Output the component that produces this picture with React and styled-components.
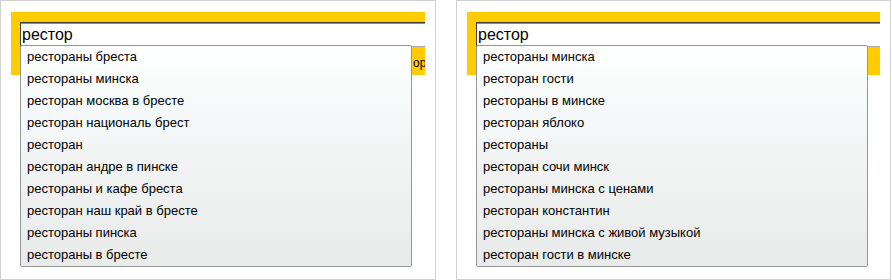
import React from 'react';
import styled, { createGlobalStyle } from 'styled-components';

const GlobalStyle = createGlobalStyle`
    body {
        margin: 0;
        background: #fff;
        font-family: 'Liberation Sans', Arial, sans-serif;
    }
`;

const Page = styled.div`
    display: flex;
    flex-direction: row;
    gap: 20px;
    width: 892px;
    height: 280px;
`;

const Panel = styled.div`
    position: relative;
    box-sizing: border-box;
    width: ${(p) => p.$width}px;
    height: 280px;
    border: 1px solid #d0d0d0;
    padding: 11px 10px 0 10px;
`;

const Yellow = styled.div`
    box-sizing: border-box;
    height: 63px;
    background: #ffcc00;
    padding: 10px 0 0 9px;
    overflow: hidden;
`;

const Input = styled.div`
    box-sizing: border-box;
    width: 420px;
    height: 25px;
    background: #fff;
    border-style: solid;
    border-width: 1px 0 1px 1px;
    border-color: #3f3f3f #c8c8c8 #a8a8a8 #3f3f3f;
    box-shadow: inset 0 1px 0 #8a8a8a;
    padding: 2px 0 0 1px;
    font-size: 16px;
    line-height: 20px;
    color: #000;
`;

const Hint = styled.div`
    padding: 9px 0 0 ${(p) => p.$indent}px;
    font-size: 12px;
    line-height: 14px;
    white-space: nowrap;
    color: #000;
`;

const Dropdown = styled.ul`
    position: absolute;
    left: 19px;
    top: 44px;
    box-sizing: border-box;
    width: 392px;
    margin: 0;
    padding: 0;
    list-style: none;
    border: 1px solid #959595;
    border-radius: 2px;
    background: linear-gradient(#ffffff, #f7fafa 25%, #e9eaea);
`;

const Item = styled.li`
    height: 22px;
    line-height: 22px;
    padding-left: 6px;
    font-size: 13px;
    color: #000;
    white-space: nowrap;
`;

const Suggest = ({ width, hint, items }) => (
    <Panel $width={width}>
        <Yellow>
            <Input>рестор</Input>
            <Hint $indent={hint ? 393 : 0}>{hint}</Hint>
        </Yellow>
        <Dropdown>
            {items.map((item) => (
                <Item key={item}>{item}</Item>
            ))}
        </Dropdown>
    </Panel>
);

const LEFT = [
    'рестораны бреста',
    'рестораны минска',
    'ресторан москва в бресте',
    'ресторан националь брест',
    'ресторан',
    'ресторан андре в пинске',
    'рестораны и кафе бреста',
    'ресторан наш край в бресте',
    'рестораны пинска',
    'рестораны в бресте',
];

const RIGHT = [
    'рестораны минска',
    'ресторан гости',
    'рестораны в минске',
    'ресторан яблоко',
    'рестораны',
    'ресторан сочи минск',
    'рестораны минска с ценами',
    'ресторан константин',
    'рестораны минска с живой музыкой',
    'ресторан гости в минске',
];

const App = () => (
    <>
        <GlobalStyle />
        <Page>
            <Suggest width={436} hint="ороторы" items={LEFT} />
            <Suggest width={435} items={RIGHT} />
        </Page>
    </>
);

export default App;
